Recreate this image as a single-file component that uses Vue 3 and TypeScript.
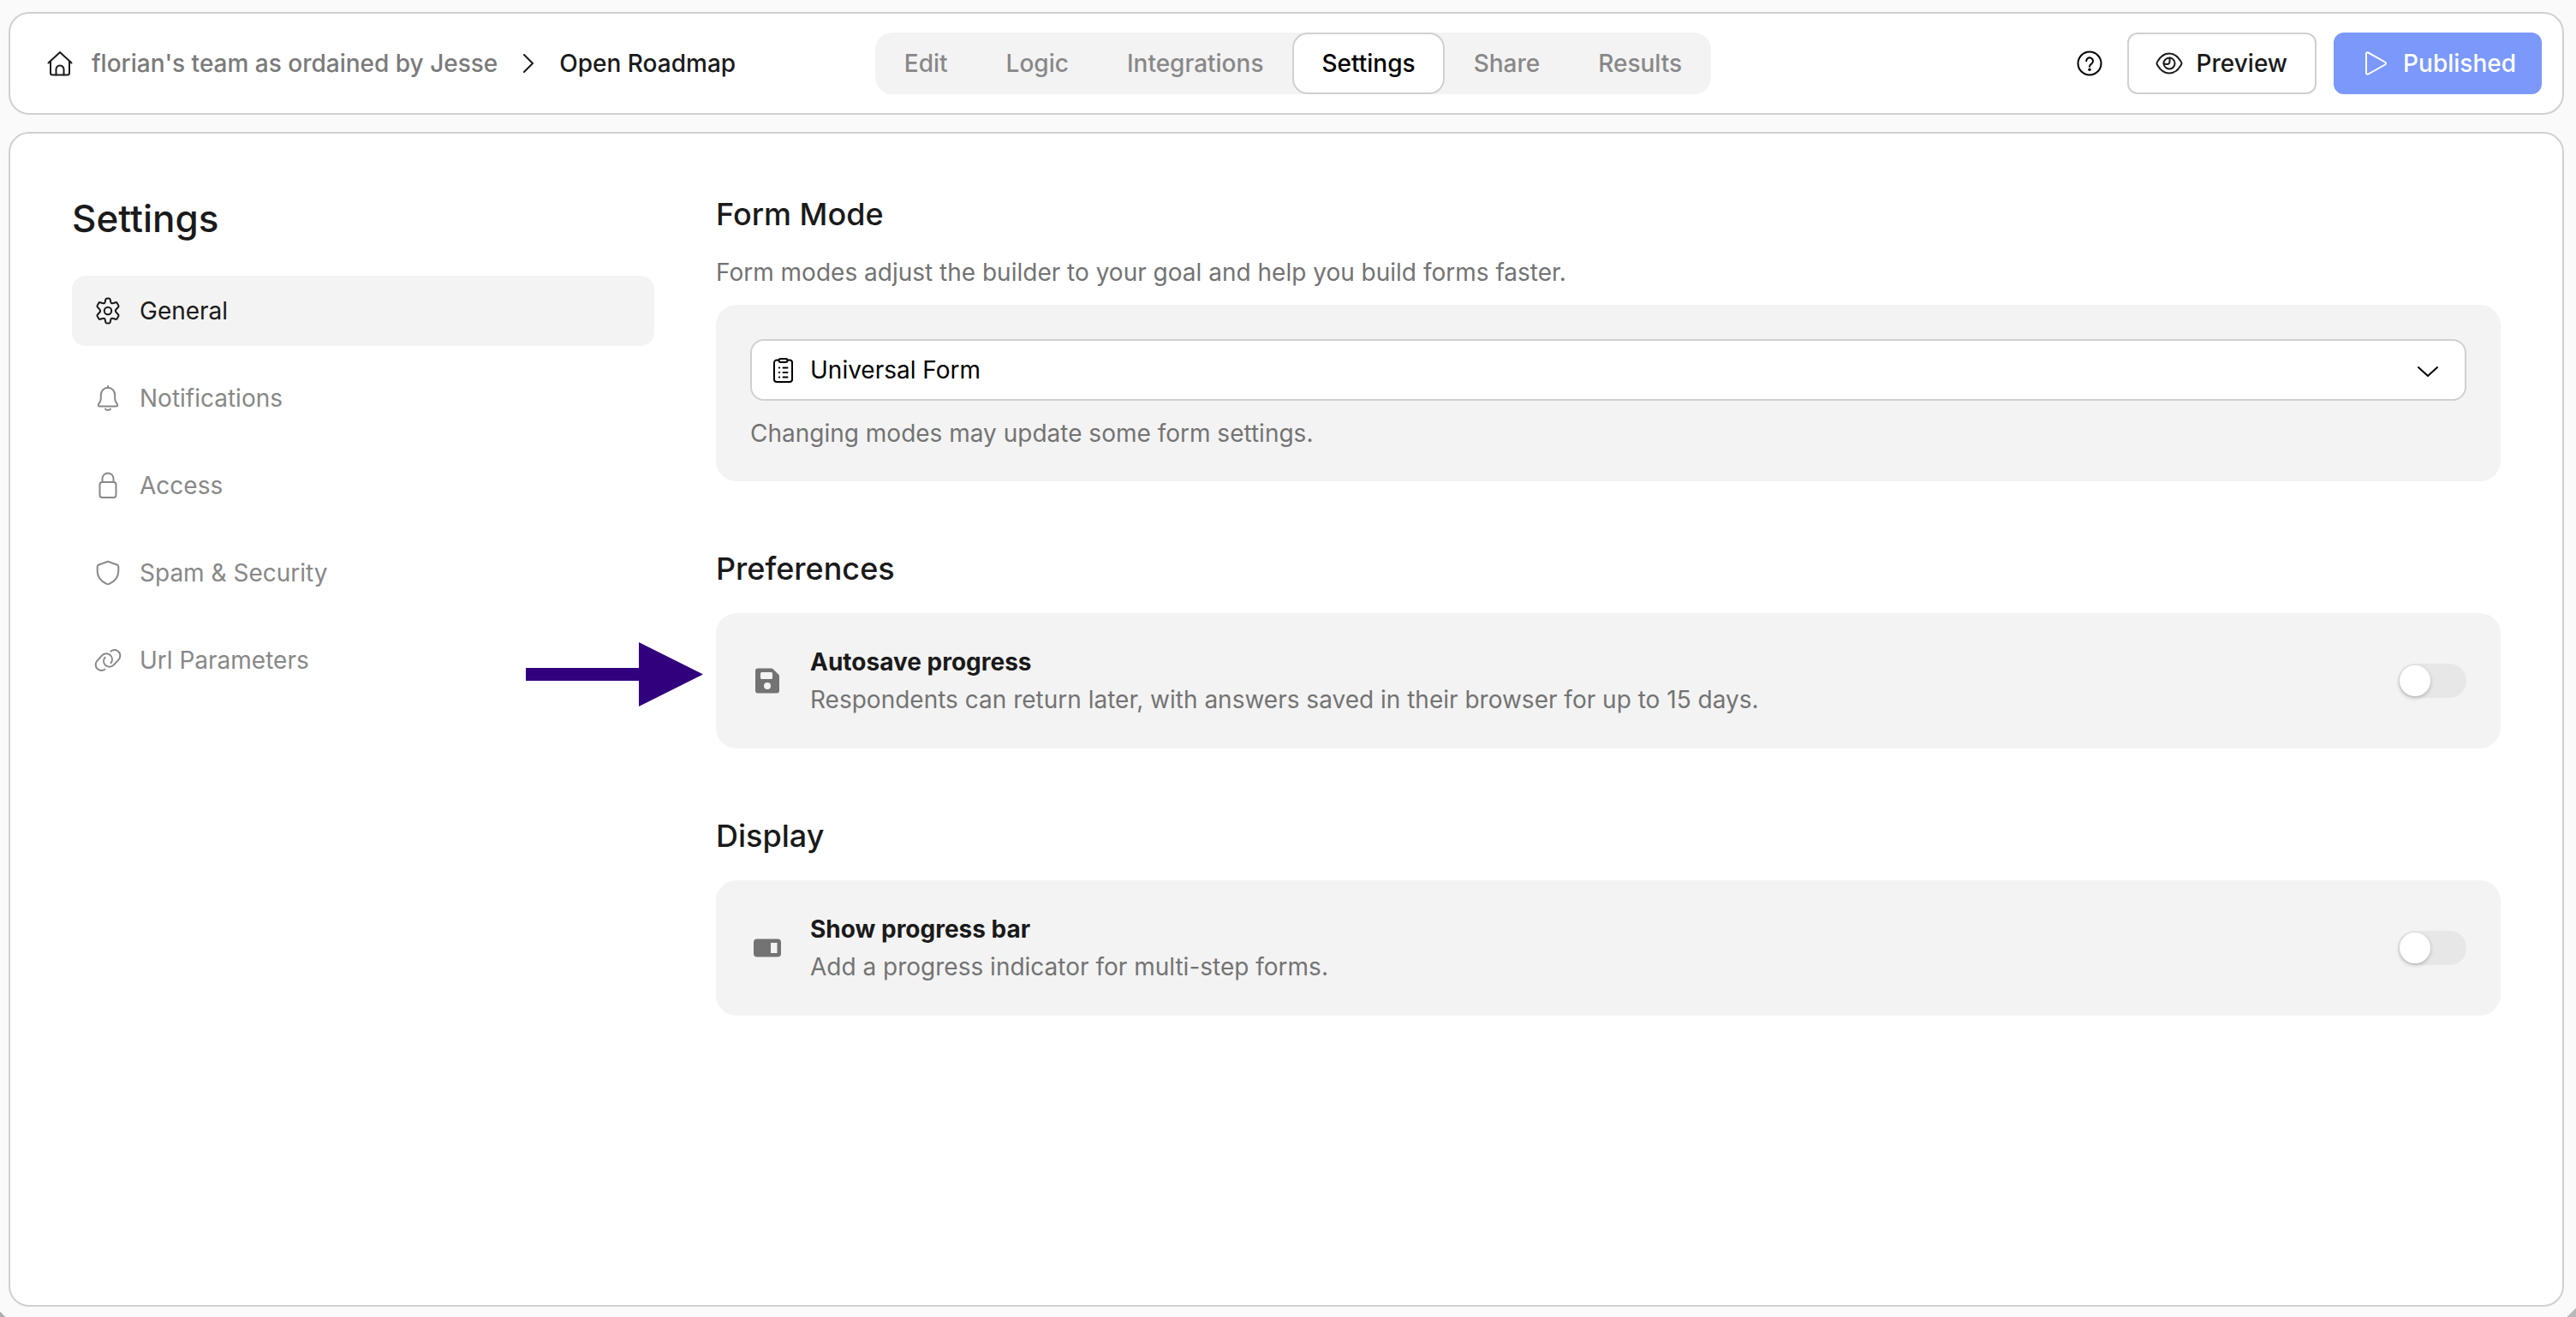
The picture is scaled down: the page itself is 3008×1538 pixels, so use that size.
<script setup lang="ts">
import { ref } from 'vue'

interface NavItem {
  id: string
  label: string
}

interface Toggle {
  id: string
  section: string
  title: string
  text: string
}

const tabs: string[] = ['Edit', 'Logic', 'Integrations', 'Settings', 'Share', 'Results']
const activeTab = ref('Settings')

const navItems: NavItem[] = [
  { id: 'general', label: 'General' },
  { id: 'notifications', label: 'Notifications' },
  { id: 'access', label: 'Access' },
  { id: 'security', label: 'Spam & Security' },
  { id: 'url', label: 'Url Parameters' },
]
const activeNav = ref('general')

const mode = ref('universal')

const toggles: Toggle[] = [
  {
    id: 'autosave',
    section: 'Preferences',
    title: 'Autosave progress',
    text: 'Respondents can return later, with answers saved in their browser for up to 15 days.',
  },
  {
    id: 'progress',
    section: 'Display',
    title: 'Show progress bar',
    text: 'Add a progress indicator for multi-step forms.',
  },
]
const enabled = ref<Record<string, boolean>>({ autosave: false, progress: false })
</script>

<template>
  <div class="page">
    <header class="topbar">
      <nav class="crumbs" aria-label="Breadcrumb">
        <a href="#" class="crumb-team">
          <svg class="icon home" viewBox="0 0 32 32" aria-hidden="true">
            <path d="M2.5 15.5 16 3l13.5 12.5" />
            <path d="M5 13.5V27a2.5 2.5 0 0 0 2.5 2.5h17A2.5 2.5 0 0 0 27 27V13.5" />
            <path d="M11.5 29.5V23a4.5 4.5 0 0 1 9 0v6.5" />
          </svg>
          <span>florian's team as ordained by Jesse</span>
        </a>
        <svg class="sep" viewBox="0 0 12 22" aria-hidden="true"><path d="M1 1l10 10L1 21" /></svg>
        <a href="#" class="crumb-form">Open Roadmap</a>
      </nav>

      <nav class="tabs" aria-label="Form">
        <button
          v-for="tab in tabs"
          :key="tab"
          type="button"
          class="tab"
          :class="{ active: tab === activeTab }"
          @click="activeTab = tab"
        >{{ tab }}</button>
      </nav>

      <div class="actions">
        <button type="button" class="help" aria-label="Help">
          <svg class="icon" viewBox="0 0 32 32" aria-hidden="true">
            <circle cx="16" cy="16" r="13.5" />
            <path d="M12.2 13.2a3.9 3.9 0 1 1 6.2 3.2c-1.5 1-2.4 1.7-2.4 3.3" />
            <circle cx="16" cy="23.2" r="1.7" class="dot" />
          </svg>
        </button>
        <button type="button" class="btn preview">
          <svg class="icon" viewBox="0 0 32 32" aria-hidden="true">
            <path d="M1.5 16c0-1 .4-1.600 1-2.500C5.500 8.500 10.500 4.500 16 4.500s10.500 4 13.500 9c.6.900 1 1.500 1 2.500s-.4 1.600-1 2.500c-3 5-8 9-13.500 9s-10.500-4-13.500-9c-.6-.900-1-1.500-1-2.500z" />
            <path d="M16.500 9.500A6.500 6.500 0 1 1 9.600 16.500" />
            <path d="M9.600 16.500c-.4-3.500 2.400-6.800 6.900-7v4.500c0 2-1.200 3-3.400 2.900z" />
          </svg>
          <span>Preview</span>
        </button>
        <button type="button" class="btn published">
          <svg class="icon" viewBox="0 0 32 32" aria-hidden="true">
            <path d="M5 5c0-1.500 1.200-2.200 2.500-1.500l19.500 11c1.300.8 1.300 2.200 0 3l-19.500 11c-1.300.7-2.500 0-2.500-1.500z" />
          </svg>
          <span>Published</span>
        </button>
      </div>
    </header>

    <main class="panel">
      <aside class="sidebar">
        <h1>Settings</h1>
        <ul>
          <li v-for="item in navItems" :key="item.id">
            <a href="#" :class="{ active: item.id === activeNav }" @click.prevent="activeNav = item.id">
              <svg class="icon" viewBox="0 0 32 32" aria-hidden="true">
                <template v-if="item.id === 'general'">
                  <path d="M13.300 2.800c.2-.8.800-1.300 1.600-1.300h2.200c.8 0 1.400.5 1.600 1.300l.7 3.200c.2.900 1.200 1.500 2.100 1.200l3.400-1c.8-.2 1.500.1 1.900.8l1.500 2.700c.4.700.3 1.500-.3 2l-2.400 2.600c-.8.900-.8 2.500 0 3.400l2.400 2.600c.6.500.7 1.300.3 2l-1.500 2.700c-.4.700-1.100 1-1.900.8l-3.400-1c-.9-.3-1.900.3-2.100 1.200l-.7 3.200c-.2.800-.8 1.300-1.600 1.300h-2.200c-.8 0-1.400-.5-1.600-1.300l-.7-3.200c-.2-.9-1.200-1.500-2.100-1.200l-3.400 1c-.8.200-1.500-.1-1.900-.8l-1.500-2.700c-.4-.7-.3-1.500.3-2l2.400-2.600c.8-.9.800-2.500 0-3.400L4 11.700c-.6-.5-.7-1.300-.3-2L5.200 7c.4-.7 1.100-1 1.900-.8l3.400 1c.9.3 1.900-.3 2.100-1.200z" />
                  <circle cx="16" cy="16" r="4.2" />
                </template>
                <template v-else-if="item.id === 'notifications'">
                  <path d="M16 2v1.800" />
                  <path d="M16 3.800c-5 0-8.200 3.800-8.200 8.800v4.200c0 2.200-.8 3.400-2.300 5.500-1.300 1.900-.8 3.200 1 3.200h19c1.800 0 2.300-1.300 1-3.200-1.500-2.100-2.300-3.300-2.300-5.500v-4.200c0-5-3.200-8.800-8.200-8.800z" />
                  <path d="M13 28.500c.8 1.300 1.800 1.600 3 1.600s2.200-.3 3-1.600" />
                </template>
                <template v-else-if="item.id === 'access'">
                  <rect x="6.5" y="12" width="19" height="18" rx="3" />
                  <path d="M9.500 12V8a6.500 6.500 0 0 1 13 0v4" />
                </template>
                <template v-else-if="item.id === 'security'">
                  <path d="M16 2.800 26.600 6.500c1.100.4 1.700 1.100 1.700 2.300V14c0 7.500-4.500 12-10.800 14.800-1.100.5-1.900.5-3 0C8.200 26 3.700 21.500 3.700 14V8.800c0-1.200.6-1.900 1.700-2.300z" />
                </template>
                <template v-else>
                  <path d="M12.500 26.500a6.800 6.800 0 0 1-9.200-.8 6.800 6.800 0 0 1 .4-9.300l5.500-6a6.800 6.800 0 0 1 9.900 0c2.300 2.400 2.500 6.200 .3 8.900" />
                  <path d="M19.500 5.500a6.800 6.800 0 0 1 9.200.8 6.800 6.800 0 0 1-.4 9.300l-5.500 6a6.800 6.800 0 0 1-9.900 0c-2.300-2.400-2.500-6.200-.3-8.900" />
                </template>
              </svg>
              <span>{{ item.label }}</span>
            </a>
          </li>
        </ul>
      </aside>

      <div class="content">
        <section>
          <h2 id="mode-title">Form Mode</h2>
          <p class="lead">Form modes adjust the builder to your goal and help you build forms faster.</p>
          <div class="card">
            <div class="select">
              <svg class="icon clipboard" viewBox="0 0 32 32" aria-hidden="true">
                <path d="M11 4.500H9A3 3 0 0 0 6 7.500v19.500A3 3 0 0 0 9 30h15a3 3 0 0 0 3-3V7.500A3 3 0 0 0 24 4.500h-2" />
                <path d="M11.500 5A2 2 0 0 1 13.500 3h6a2 2 0 0 1 2 2v0a2 2 0 0 1-2 2h-6A2 2 0 0 1 11.500 5z" />
                <path d="M16.500 13.500h5M16.500 19h5M16.500 24.500h5M11.800 13.500h.4M11.800 19h.4M11.800 24.500h.4" />
              </svg>
              <select v-model="mode" aria-labelledby="mode-title">
                <option value="universal">Universal Form</option>
              </select>
              <svg class="caret" viewBox="0 0 26 14" aria-hidden="true"><path d="M2 2l11 10L24 2" /></svg>
            </div>
            <p class="hint">Changing modes may update some form settings.</p>
          </div>
        </section>

        <section v-for="item in toggles" :key="item.id">
          <h2>{{ item.section }}</h2>
          <div class="card row">
            <svg v-if="item.id === 'autosave'" class="icon solid" viewBox="0 0 32 32" aria-hidden="true">
              <path fill-rule="evenodd" d="M5 1.500h15.500c1 0 1.700.3 2.400 1L29 8.600c.7.700 1 1.400 1 2.400V27.500a3 3 0 0 1-3 3H5a3 3 0 0 1-3-3v-23a3 3 0 0 1 3-3zM9.500 6A1.500 1.500 0 0 0 8 7.500v5A1.500 1.500 0 0 0 9.500 14h11a1.500 1.500 0 0 0 1.500-1.500v-5A1.500 1.500 0 0 0 20.500 6zM16 18a4 4 0 1 0 0 8 4 4 0 0 0 0-8z" />
            </svg>
            <svg v-else class="icon solid" viewBox="0 0 32 32" aria-hidden="true">
              <path fill-rule="evenodd" d="M4 5.500h24a4 4 0 0 1 4 4v13a4 4 0 0 1-4 4H4a4 4 0 0 1-4-4v-13a4 4 0 0 1 4-4zM20 10v12h7.500V10z" />
            </svg>
            <label class="copy" :for="item.id">
              <strong>{{ item.title }}</strong>
              <span>{{ item.text }}</span>
            </label>
            <input :id="item.id" v-model="enabled[item.id]" type="checkbox" role="switch" class="switch" />
          </div>
        </section>
      </div>

      <svg class="pointer" viewBox="0 0 207 75" aria-hidden="true">
        <path d="M0 30h132V0l75 37.500L132 75V45H0z" />
      </svg>
    </main>
  </div>
</template>

<style>
body {
  background: #fafafa;
}
</style>

<style scoped>
.page {
  box-sizing: border-box;
  min-height: 100vh;
  padding: 14px 14px 12px 10px;
  display: flex;
  flex-direction: column;
  gap: 20px;
  background:
    linear-gradient(45deg, #adadad 4px, transparent 5px),
    linear-gradient(-45deg, #b8b8b8 7px, transparent 8px),
    #fafafa;
  font-family: Inter, "Liberation Sans", sans-serif;
  font-size: 28px;
  line-height: 36px;
  color: #1a1a1a;
}

.page * {
  box-sizing: border-box;
}

button,
select {
  font: inherit;
  margin: 0;
}

a {
  color: inherit;
  text-decoration: none;
}

h1,
h2,
p,
ul {
  margin: 0;
  padding: 0;
}

.icon {
  width: 32px;
  height: 32px;
  flex: none;
  fill: none;
  stroke: currentColor;
  stroke-width: 2;
  stroke-linecap: round;
  stroke-linejoin: round;
}

.topbar {
  display: grid;
  grid-template-columns: 1fr auto 1fr;
  align-items: center;
  height: 120px;
  padding: 0 24px 0 40px;
  border: 2px solid #d0d0d0;
  border-radius: 24px;
  background: #fff;
}

.crumbs {
  display: flex;
  align-items: center;
  gap: 30px;
  padding-left: 2px;
  white-space: nowrap;
}

.crumb-team {
  display: flex;
  align-items: center;
  gap: 21px;
  font-weight: 500;
  color: #7a7a7a;
}

.home {
  color: #1a1a1a;
}

.sep {
  width: 12px;
  height: 22px;
  fill: none;
  stroke: #1a1a1a;
  stroke-width: 2;
  stroke-linecap: round;
  stroke-linejoin: round;
}

.crumb-form {
  font-weight: 500;
}

.tabs {
  display: flex;
  border-radius: 20px;
  background: #f3f3f3;
}

.tab {
  height: 72px;
  padding: 0 32px;
  border: 2px solid transparent;
  border-radius: 18px;
  background: none;
  font-weight: 500;
  color: #888;
}

.tab.active {
  border-color: #d0d0d0;
  background: #fff;
  color: #000;
}

.actions {
  display: flex;
  align-items: center;
  justify-content: flex-end;
  gap: 20px;
}

.help {
  display: flex;
  padding: 8px;
  border: 0;
  background: none;
  color: #000;
}

.dot {
  fill: currentColor;
  stroke: none;
}

.btn {
  display: flex;
  align-items: center;
  gap: 16px;
  height: 72px;
  border: 2px solid #d0d0d0;
  border-radius: 12px;
  background: #fff;
  font-weight: 500;
  color: #1a1a1a;
}

.preview {
  padding: 0 32px 0 31px;
}

.published {
  padding: 0 28px 0 31px;
  border-color: #7b98fb;
  background: #7b98fb;
  color: #fff;
}

.panel {
  position: relative;
  flex: 1;
  display: grid;
  grid-template-columns: 680px 1fr;
  column-gap: 72px;
  align-items: start;
  padding: 72px;
  border: 2px solid #d0d0d0;
  border-radius: 24px;
  background: #fff;
}

.sidebar h1 {
  margin-bottom: 40px;
  font-size: 44px;
  line-height: 54px;
  font-weight: 500;
}

.sidebar ul {
  display: flex;
  flex-direction: column;
  gap: 20px;
  list-style: none;
}

.sidebar a {
  display: flex;
  align-items: center;
  gap: 21px;
  height: 82px;
  padding: 0 26px;
  border-radius: 16px;
  color: #888;
}

.sidebar a.active {
  background: #f3f3f3;
  color: #1a1a1a;
}

.content {
  display: flex;
  flex-direction: column;
  gap: 80px;
}

h2 {
  margin-bottom: 30px;
  font-size: 36px;
  line-height: 44px;
  font-weight: 500;
}

.lead {
  margin: -2px 0 20px;
  color: #737373;
}

.card {
  padding: 40px;
  border-radius: 24px;
  background: #f3f3f3;
}

.select {
  position: relative;
}

.select select {
  display: block;
  width: 100%;
  height: 72px;
  padding: 0 80px 0 68px;
  border: 2px solid #d0d0d0;
  border-radius: 16px;
  appearance: none;
  background: #fff;
  color: #000;
}

.clipboard {
  position: absolute;
  left: 22px;
  top: 20px;
  pointer-events: none;
  color: #000;
}

.caret {
  position: absolute;
  right: 32px;
  top: 31px;
  width: 26px;
  height: 14px;
  pointer-events: none;
  fill: none;
  stroke: #000;
  stroke-width: 2;
  stroke-linecap: round;
  stroke-linejoin: round;
}

.hint {
  margin: 20px 0 -2px;
  color: #737373;
}

.row {
  display: flex;
  align-items: center;
  gap: 34px;
  padding: 35px 40px 35px 44px;
}

.solid {
  fill: #737373;
  stroke: none;
}

.copy {
  flex: 1;
  display: flex;
  flex-direction: column;
  line-height: 44px;
  color: #737373;
}

.copy strong {
  font-weight: 700;
  color: #1a1a1a;
}

.switch {
  position: relative;
  appearance: none;
  width: 80px;
  height: 40px;
  margin: 0;
  border-radius: 20px;
  background: #e7e7e7;
}

.switch::before {
  content: "";
  position: absolute;
  left: 2px;
  top: 2px;
  width: 36px;
  height: 36px;
  border-radius: 50%;
  background: #fff;
  box-shadow: 0 2px 5px rgba(0, 0, 0, 0.22);
}

.switch:checked {
  background: #7b98fb;
}

.switch:checked::before {
  left: 42px;
}

.pointer {
  position: absolute;
  left: 602px;
  top: 594px;
  width: 207px;
  height: 75px;
  fill: #30007d;
}
</style>
